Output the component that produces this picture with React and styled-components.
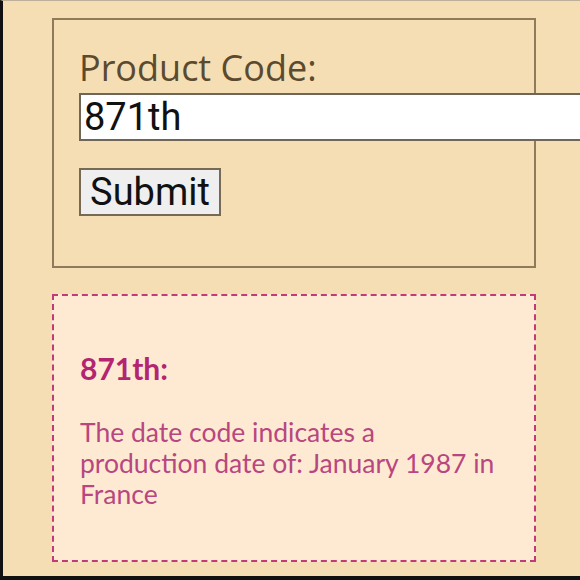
import styled, { createGlobalStyle } from "styled-components";

const GlobalStyle = createGlobalStyle`
  html, body {
    margin: 0;
    padding: 0;
    background: #f5deb3;
  }
`

const Screen = styled.div`
  box-sizing: border-box;
  width: 580px;
  height: 580px;
  overflow: hidden;
  display: flex;
  flex-direction: column;
  gap: 26px;
  padding: 17px 0 0 49px;
  background: #f5deb3;
  border-top: 1px solid #bdb09a;
  border-left: 3px solid #111;
  border-bottom: 4px solid #111;
`

const LookupForm = styled.form`
  box-sizing: border-box;
  width: 484px;
  display: flex;
  flex-direction: column;
  align-items: flex-start;
  padding: 28px 0 50px 25px;
  border: 2px solid #8d7b5b;
  overflow: visible;
`

const Label = styled.label`
  font-family: "Open Sans", sans-serif;
  font-size: 36px;
  line-height: 40px;
  color: #5b4a2f;
  margin-bottom: 5px;
`

const CodeInput = styled.input`
  box-sizing: border-box;
  width: 540px;
  height: 48px;
  margin: 0 0 27px;
  padding: 0 3px;
  font-family: Roboto, sans-serif;
  font-size: 38px;
  color: #111;
  background: #fff;
  border: 2px solid #6f6657;
  outline: none;
`

const SubmitButton = styled.button`
  box-sizing: border-box;
  width: 142px;
  height: 48px;
  padding: 0 8px;
  font-family: Roboto, sans-serif;
  font-size: 38px;
  color: #111;
  background: #efefef;
  border: 2px solid #766a55;
  border-radius: 0;
`

const ResultCard = styled.section`
  box-sizing: border-box;
  width: 484px;
  padding: 54px 26px 50px 26px;
  background: #feead3;
  border: 2px dashed #c23a7a;
  font-family: Lato, sans-serif;
`

const ResultTitle = styled.h3`
  margin: 0 0 31px;
  font-size: 30px;
  line-height: 36px;
  font-weight: 700;
  color: #b32571;
`

const ResultText = styled.p`
  margin: 0;
  max-width: 422px;
  font-size: 26.5px;
  line-height: 31px;
  color: #b8477f;
`

export default function App() {
  return (
    <>
      <GlobalStyle />
      <Screen>
        <LookupForm onSubmit={(e) => e.preventDefault()}>
          <Label htmlFor="code">Product Code:</Label>
          <CodeInput id="code" defaultValue="871th" />
          <SubmitButton type="submit">Submit</SubmitButton>
        </LookupForm>
        <ResultCard>
          <ResultTitle>871th:</ResultTitle>
          <ResultText>
            The date code indicates a production date of: January 1987 in France
          </ResultText>
        </ResultCard>
      </Screen>
    </>
  )
}
